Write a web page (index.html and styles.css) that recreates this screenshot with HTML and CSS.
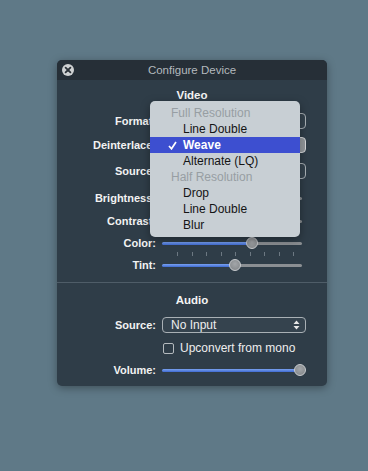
FILE: index.html
```html
<!DOCTYPE html>
<html lang="en">
<head>
    <meta charset="UTF-8">
    <meta name="viewport" content="width=device-width, initial-scale=1.0">
    <title>Configure Device</title>
    <link rel="stylesheet" href="styles.css">
</head>
<body>
    <div class="window">
        <div class="titlebar">
            <span class="close">
                <svg width="12" height="12" viewBox="0 0 12 12">
                    <circle cx="6" cy="6" r="6" fill="#cfd1d2"/>
                    <path d="M3.6 3.6 L8.4 8.4 M8.4 3.6 L3.6 8.4" stroke="#2b3238" stroke-width="1.8" stroke-linecap="round"/>
                </svg>
            </span>
            <span class="title">Configure Device</span>
        </div>

        <!-- Video -->
        <div class="section video">
            <div class="heading">Video</div>
            <div class="row r-format">
                <span class="label">Format:</span>
                <div class="popup"></div>
            </div>
            <div class="row r-deint">
                <span class="label">Deinterlace:</span>
                <div class="popup lit"></div>
            </div>
            <div class="row r-source">
                <span class="label">Source:</span>
                <div class="popup"></div>
            </div>
            <div class="row r-bright">
                <span class="label">Brightness:</span>
                <div class="slider"><span class="fill" style="width: 70px"></span><span class="knob"></span><span class="rest"></span></div>
            </div>
            <div class="row r-contrast">
                <span class="label">Contrast:</span>
                <div class="slider"><span class="fill" style="width: 70px"></span><span class="knob"></span><span class="rest"></span></div>
            </div>
            <div class="row r-color">
                <span class="label">Color:</span>
                <div class="slider"><span class="fill" style="width: 90px"></span><span class="knob"></span><span class="rest"></span></div>
            </div>
            <div class="ticks">
                <span></span><span></span><span></span><span></span><span></span><span></span><span></span><span></span><span></span>
            </div>
            <div class="row r-tint">
                <span class="label">Tint:</span>
                <div class="slider"><span class="fill" style="width: 73px"></span><span class="knob"></span><span class="rest"></span></div>
            </div>
        </div>

        <div class="divider"></div>

        <!-- Audio -->
        <div class="section audio">
            <div class="heading">Audio</div>
            <div class="row r-asource">
                <span class="label">Source:</span>
                <div class="popup">
                    <span class="value">No Input</span>
                    <svg class="arrows" width="7" height="10" viewBox="0 0 7 10">
                        <path d="M3.5 0.5 L6.5 4 L0.5 4 Z M3.5 9.5 L6.5 6 L0.5 6 Z" fill="#e8e8e8"/>
                    </svg>
                </div>
            </div>
            <div class="row r-check">
                <span class="label"></span>
                <div class="checkline"><span class="box"></span>Upconvert from mono</div>
            </div>
            <div class="row r-volume">
                <span class="label">Volume:</span>
                <div class="slider"><span class="fill" style="width: 138px"></span><span class="knob"></span><span class="rest"></span></div>
            </div>
        </div>

        <!-- Deinterlace menu -->
        <div class="menu">
            <div class="menu-header">Full Resolution</div>
            <div class="menu-item">Line Double</div>
            <div class="menu-item selected">
                <svg width="9" height="9" viewBox="0 0 9 9"><path d="M1 5 L3.5 7.8 L8 1" fill="none" stroke="#fff" stroke-width="1.7"/></svg>
                Weave
            </div>
            <div class="menu-item">Alternate (LQ)</div>
            <div class="menu-header">Half Resolution</div>
            <div class="menu-item">Drop</div>
            <div class="menu-item">Line Double</div>
            <div class="menu-item">Blur</div>
        </div>
    </div>
</body>
</html>
```

FILE: styles.css
```css
body {
    margin: 0;
    padding: 60px 0 0 57px;
    background-color: #5f7987;
    font-family: 'Liberation Sans', Arial, sans-serif;
    height: 100vh;
    box-sizing: border-box;
}

.window {
    position: relative;
    width: 270px;
    background-color: #2f3d48;
    border-radius: 5px;
    box-shadow: 0 2px 8px rgba(0, 0, 0, 0.35);
    padding-bottom: 8px;
}

.titlebar {
    height: 20px;
    display: grid;
    grid-template-columns: 1fr auto 1fr;
    align-items: center;
    background-color: #262f37;
    border-radius: 5px 5px 0 0;
}

.close {
    padding-left: 5px;
    display: flex;
}

.title {
    font-size: 11.5px;
    color: #b4b9bd;
}

.section {
    display: flex;
    flex-direction: column;
}

.video {
    padding: 7px 0 9px;
}

.audio {
    padding-top: 9px;
}

.heading {
    height: 16px;
    line-height: 16px;
    text-align: center;
    font-size: 11.5px;
    font-weight: bold;
    color: #f4f4f4;
}

.row {
    height: 16px;
    display: grid;
    grid-template-columns: 99px 1fr;
    column-gap: 6px;
    align-items: center;
}

.r-format { margin-top: 10px; }
.r-deint { margin-top: 8px; }
.r-source { margin-top: 10px; }
.r-bright { margin-top: 11px; }
.r-contrast { margin-top: 7px; }
.r-color { margin-top: 6px; }
.r-asource { margin-top: 9px; }
.r-check { margin-top: 7px; }
.r-volume { margin-top: 6px; }

.label {
    text-align: right;
    font-size: 11px;
    font-weight: bold;
    color: #f2f2f2;
}

.popup {
    width: 144px;
    height: 16px;
    box-sizing: border-box;
    border: 1px solid #a9b0b5;
    border-radius: 4px;
    background-color: #35434e;
    display: flex;
    align-items: center;
    justify-content: space-between;
    padding: 0 5px 0 8px;
}

.popup.lit {
    border-color: #d6d8da;
    background: linear-gradient(to right, #d8dadc, #c2c5c8 80%, #8f9498);
}

.popup .value {
    font-size: 12px;
    color: #eeeeee;
}

.slider {
    width: 140px;
    height: 16px;
    display: flex;
    align-items: center;
}

.fill {
    height: 3px;
    background: linear-gradient(#7aa2f0, #3f6bd2);
    border-radius: 2px 0 0 2px;
}

.knob {
    width: 12px;
    height: 12px;
    box-sizing: border-box;
    margin: 0 -6px;
    border-radius: 50%;
    border: 1px solid #c9cccf;
    background: radial-gradient(circle at 50% 40%, #a3a6a9, #7f8386);
    z-index: 1;
}

.rest {
    flex: 1;
    height: 3px;
    background-color: #8b8f93;
    border-radius: 0 2px 2px 0;
}

.ticks {
    height: 6px;
    padding: 0 33px 0 120px;
    display: flex;
    justify-content: space-between;
    align-items: flex-start;
}

.ticks span {
    width: 1px;
    height: 4px;
    margin-top: 1px;
    background-color: #6c7882;
}

.divider {
    height: 1px;
    background-color: #4f5d68;
}

.checkline {
    display: flex;
    align-items: center;
    gap: 6px;
    font-size: 12px;
    color: #eeeeee;
}

.box {
    width: 11px;
    height: 11px;
    box-sizing: border-box;
    border: 1px solid #b4babe;
    border-radius: 2px;
    margin-left: 1px;
}

/* popup menu over the Deinterlace button */
.menu {
    position: absolute;
    z-index: 5;
    left: 93px;
    top: 41px;
    width: 150px;
    padding: 4px 0;
    background-color: #c8cfd4;
    border-radius: 5px;
    box-shadow: 0 3px 10px rgba(0, 0, 0, 0.35);
    font-size: 12px;
}

.menu-header,
.menu-item {
    height: 16px;
    line-height: 16px;
    white-space: nowrap;
}

.menu-header {
    padding-left: 21px;
    color: #979ea3;
}

.menu-item {
    padding-left: 33px;
    color: #141414;
}

.menu-item.selected {
    display: flex;
    align-items: center;
    padding-left: 18px;
    gap: 6px;
    background-color: #3d4fd0;
    color: #ffffff;
    font-weight: bold;
}
```
